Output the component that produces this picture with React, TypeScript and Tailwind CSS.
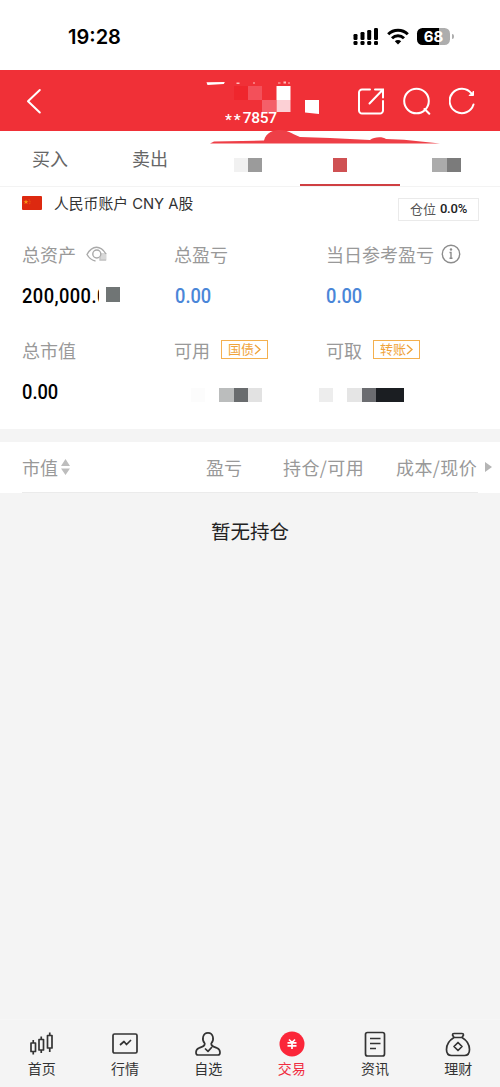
import clsx from "clsx";
import { ReactNode } from "react";

export default function App() {
  return (
    <div className="flex h-[1087px] w-[500px] flex-col overflow-hidden bg-[#f4f4f4] font-['Noto_Sans_CJK_SC','Noto_Sans',sans-serif]">
      <StatusBar />
      <Header />
      <Tabs />
      <Account />
      <Holdings />
      <BottomNav />
    </div>
  );
}

function StatusBar() {
  return (
    <div className="flex h-[70px] shrink-0 items-start justify-between bg-white pr-[46px] pl-[68px]">
      <span className="mt-[23px] font-['Inter',sans-serif] text-[20px] leading-7 font-semibold text-black">
        19:28
      </span>
      <div className="mt-[27px] flex items-center">
        <svg width="26" height="19" viewBox="0 0 26 19">
          <rect x="0.5" y="7" width="4" height="6" rx="1.2" />
          <rect x="7.5" y="5" width="4" height="8" rx="1.2" />
          <rect x="14.2" y="3" width="4" height="10" rx="1.2" />
          <rect x="21" y="1" width="4" height="12" rx="1.2" />
          <rect x="0.5" y="14" width="4" height="4" rx="1.3" />
          <rect x="7.5" y="14" width="4" height="4" rx="1.3" />
          <rect x="14.2" y="14" width="4" height="4" rx="1.3" />
          <rect x="21" y="14" width="4" height="4" rx="1.3" />
        </svg>
        <svg
          className="ml-2"
          width="22"
          height="17"
          viewBox="0 0 22 17"
          fill="none"
          stroke="#000"
          strokeWidth="3"
        >
          <path d="M1.2 6.3a14 14 0 0 1 19.6 0" />
          <path d="M5 10.3a8.6 8.6 0 0 1 12 0" />
          <path d="M7.8 13.2a4.6 4.6 0 0 1 6.4 0L11 16.4z" fill="#000" stroke="none" />
        </svg>
        <div className="ml-2 flex h-[17px] w-[33px] items-center justify-center rounded-[5.5px] bg-linear-to-r from-black from-68% to-[#adadad] to-68%">
          <span className="font-['Inter',sans-serif] text-[15px] leading-none font-bold text-white">
            68
          </span>
        </div>
        <span className="ml-0.5 h-[5px] w-[2px] rounded-r bg-[#adadad]" />
      </div>
    </div>
  );
}

function Header() {
  return (
    <header className="relative flex h-[61px] shrink-0 items-center justify-between bg-[#f03037] pr-[25px] pl-[26px]">
      <svg
        width="17"
        height="26"
        viewBox="0 0 17 26"
        fill="none"
        stroke="#fff"
        strokeWidth="2"
        strokeLinecap="round"
        strokeLinejoin="round"
      >
        <path d="M13.8 2 2 13.2 13.8 24.5" />
      </svg>
      <div className="absolute top-[42px] left-[225px] flex h-[13px] w-[54px] items-end overflow-hidden font-['Roboto',sans-serif] text-[15.5px] leading-[15px] font-medium whitespace-nowrap text-white">
        <span className="translate-y-[3px] tracking-[2px]">**</span>
        <span className="translate-y-px tracking-[-0.3px]">7857</span>
      </div>
      <svg
        className="pointer-events-none absolute top-0 left-[200px] z-10"
        width="250"
        height="76"
        viewBox="0 0 250 76"
      >
        <path d="M6.5 12.2 24.8 12l-1 2.1L7.5 15z" fill="#fff" />
        <path
          d="M36.5 12.5h3v1.5h-3zM53 12.5h2v1h-2zM78 12.5h2.5v1H78zM83.5 11.5H86v2h-2.5zM88 12.5h2v1h-2z"
          fill="#fbb"
        />
        <path d="M34 16h14v14H34z" fill="#ef262d" />
        <path d="M48 16h14v14H48z" fill="#f3505a" />
        <path d="M62 30h14v12H62z" fill="#f45f69" />
        <path d="M76.5 16h14v14h-14z" fill="#fff" />
        <path d="M76.5 30h14v12h-14z" fill="#fcd0d5" />
        <path d="M105 30h14v14l-14-1.5z" fill="#fff" />
        <path
          d="M10 73.5 14 71.5 64 70.500C66 62 74 60 80 60c8 0 10 3 20 7l30 1 40 2c4-3.500 13-3.500 16-1l18 .8 36 3.700z"
          fill="#ee3f47"
        />
      </svg>
      <div className="flex items-center gap-[18px]">
        <svg
          width="27"
          height="28"
          viewBox="0 0 27 28"
          fill="none"
          stroke="#fff"
          strokeWidth="2"
          strokeLinecap="round"
        >
          <path d="M12 2.500H4a3 3 0 0 0-3 3v18a3 3 0 0 0 3 3h18a3 3 0 0 0 3-3V14M11.500 16.500 24.500 3M17 2.500h8v8" />
        </svg>
        <svg
          width="28"
          height="28"
          viewBox="0 0 28 28"
          fill="none"
          stroke="#fff"
          strokeWidth="2"
          strokeLinecap="round"
        >
          <circle cx="13.500" cy="14" r="12.300" />
          <path d="m21.500 22 4.800 4.800" />
        </svg>
        <svg
          width="26"
          height="28"
          viewBox="0 0 26 28"
          fill="none"
          stroke="#fff"
          strokeWidth="2"
          strokeLinecap="round"
        >
          <path d="M24.500 17.500A12.200 12.200 0 1 1 22.500 6.500" />
          <path d="M24.500 4.500v4h-4z" fill="#fff" strokeWidth="1" />
        </svg>
      </div>
    </header>
  );
}

function Tabs() {
  return (
    <div className="grid h-[56px] shrink-0 grid-cols-5 border-b border-[#f3f3f3] bg-white text-[18px] text-[#666]">
      <div className="flex items-center justify-center">买入</div>
      <div className="flex items-center justify-center">卖出</div>
      <div className="flex justify-center pt-[27px] pr-1">
        <Mosaic colors={["bg-[#f1f1f1]", "bg-[#9b9b9b]"]} />
      </div>
      <div className="flex flex-col items-center justify-between border-b-2 border-[#cf3f42] pt-[27px] pr-5">
        <Mosaic colors={["bg-[#cf5153]"]} />
      </div>
      <div className="flex justify-center pt-[27px] pr-[7px]">
        <Mosaic colors={["bg-[#ababab]", "bg-[#7b7b7b]"]} />
      </div>
    </div>
  );
}

function Account() {
  return (
    <section className="flex h-[242px] shrink-0 flex-col bg-white">
      <div className="flex h-9 items-center pr-[21px] pl-[22px]">
        <svg className="-mt-1" width="20" height="14" viewBox="0 0 20 14">
          <rect width="20" height="14" rx="1" fill="#dd2910" />
          <path
            d="m4 3.500.7 1.700h1.800L5 6.300l.6 1.800L4 7 2.400 8.100 3 6.300 1.500 5.200h1.800z"
            fill="#fb9a16"
          />
          <path d="M7 3.500q2 2.500 0 5.500" stroke="#ec6d16" fill="none" strokeDasharray="1 1" />
        </svg>
        <span className="-mt-0.5 ml-[12px] font-['Inter','Noto_Sans_CJK_SC',sans-serif] text-[14.8px] whitespace-nowrap text-[#333]">
          人民币账户 CNY A股
        </span>
        <div className="mt-2 ml-auto flex h-[23px] w-[81px] items-center justify-center gap-[4px] border border-[#eaeaea] text-[13px] text-[#555]">
          仓位
          <span className="font-['Roboto',sans-serif] text-[13px] font-medium tracking-[-0.2px] text-[#222]">
            0.0%
          </span>
        </div>
      </div>

      <div className="grid grid-cols-[152px_152px_1fr] pt-[16px] pl-[22px]">
        <Stat label="总资产" extra={<EyeIcon />}>
          <div className="flex items-center">
            <div className="w-[77px] overflow-hidden">
              <Amount value="200,000.0" className="tracking-[0.5px]" />
            </div>
            <div className="-mt-[3px] ml-[7px]">
              <Mosaic colors={["bg-[#707575]"]} />
            </div>
          </div>
        </Stat>
        <Stat label="总盈亏">
          <Amount value="0.00" className="ml-px text-[#4a86d8]" />
        </Stat>
        <Stat label="当日参考盈亏" extra={<InfoIcon />}>
          <Amount value="0.00" className="text-[#4a86d8]" />
        </Stat>
      </div>

      <div className="grid grid-cols-[152px_152px_1fr] pt-[25px] pl-[22px]">
        <Stat label="总市值">
          <Amount value="0.00" />
        </Stat>
        <Stat label="可用" extra={<Tag>国债</Tag>}>
          <div className="flex pt-[10px] pl-[17px]">
            <Mosaic
              colors={[
                "bg-[#fcfcfc]",
                "bg-white",
                "bg-[#bbbdbd]",
                "bg-[#696c6e]",
                "bg-[#e2e2e2]",
              ]}
            />
          </div>
        </Stat>
        <Stat label="可取" extra={<Tag>转账</Tag>}>
          <div className="-ml-[7px] flex pt-[10px]">
            <Mosaic
              colors={[
                "bg-[#ededed]",
                "bg-white",
                "bg-[#e5e5e5]",
                "bg-[#6b6c70]",
                "bg-[#1b1e22]",
                "bg-[#1b1e22]",
              ]}
            />
          </div>
        </Stat>
      </div>
    </section>
  );
}

interface StatProps {
  label: string;
  extra?: ReactNode;
  children: ReactNode;
}
function Stat({ label, extra, children }: StatProps) {
  return (
    <div>
      <div className="flex h-[30px] items-center text-[18px] whitespace-nowrap text-[#999]">
        {label}
        {extra}
      </div>
      <div className="mt-[13px] h-7">{children}</div>
    </div>
  );
}

function Amount({ value, className }: { value: string; className?: string }) {
  return (
    <div
      className={clsx(
        "origin-left scale-x-[0.87] font-['Roboto',sans-serif] text-[21px] leading-7 font-medium",
        className,
      )}
    >
      {value}
    </div>
  );
}

function Tag({ children }: { children: ReactNode }) {
  return (
    <span className="-mt-0.5 ml-[11px] flex h-[19px] w-[47px] items-center justify-center border-[1.5px] border-[#f4b04e] text-[13px] text-[#f0a43c]">
      {children}
      <svg
        width="7"
        height="11"
        viewBox="0 0 7 11"
        fill="none"
        stroke="#f0a43c"
        strokeWidth="1.4"
      >
        <path d="m1 1 5 4.500L1 10" />
      </svg>
    </span>
  );
}

function Mosaic({ colors }: { colors: string[] }) {
  return (
    <div className="flex">
      {colors.map((color, index) => (
        <span key={index} className={clsx("size-[14.2px]", color)} />
      ))}
    </div>
  );
}

function EyeIcon() {
  return (
    <svg
      className="ml-[10px]"
      width="21"
      height="16"
      viewBox="0 0 21 16"
      fill="none"
      stroke="#aaa"
      strokeWidth="1.4"
    >
      <path d="M14 7h6.500v7.500H14z" fill="#d8d8d8" stroke="none" />
      <path d="M9.500 15C6 14.500 3 12 1 8.500 3.500 4 6.500 1.300 10.500 1.300S17.500 4 20 8" />
      <circle cx="10.800" cy="8" r="4" />
      <path d="M14 10.500v3.500h6" stroke="#c4c4c4" />
    </svg>
  );
}

function InfoIcon() {
  return (
    <svg
      className="ml-[7px]"
      width="20"
      height="20"
      viewBox="0 0 20 20"
      fill="none"
      stroke="#8c8c8c"
      strokeWidth="1.4"
    >
      <circle cx="10" cy="10" r="8.700" />
      <path d="M8.500 8.500H10v5.500M8.500 14.300h3" />
      <circle cx="10" cy="5.500" r="1.200" fill="#8c8c8c" stroke="none" />
    </svg>
  );
}

function Holdings() {
  return (
    <section className="flex grow flex-col pt-[13px]">
      <div className="flex h-[50px] items-center bg-white pl-[22px] text-[18px] whitespace-nowrap text-[#999]">
        <span>市值</span>
        <svg className="ml-[3px]" width="9" height="16" viewBox="0 0 9 16" fill="#bdbdbd">
          <path d="m4.500 0 4.500 7H0zM4.500 16 9 9.500H0z" />
        </svg>
        <span className="ml-[136px]">盈亏</span>
        <span className="ml-[41px] tracking-[0.4px]">持仓/可用</span>
        <span className="ml-[32px] tracking-[0.4px]">成本/现价</span>
        <svg className="ml-2" width="7" height="10" viewBox="0 0 7 10" fill="#b5b5b5">
          <path d="m0 0 7 5-7 5z" />
        </svg>
      </div>
      <div className="bg-white px-[22px]">
        <div className="h-px bg-[#ebebeb]" />
      </div>
      <p className="mt-[23px] text-center text-[19.5px] leading-[30px] text-[#222]">暂无持仓</p>
    </section>
  );
}

const NAV_ITEMS: { title: string; icon: ReactNode; active?: boolean }[] = [
  {
    title: "首页",
    icon: (
      <path d="M3 12h4.500v8.500H3zM5.250 9V12M5.250 20.500v3M11 8.500h4.500v10.500H11zM13.250 5.500v3M13.250 19v3M19.500 4.500H24V17h-4.500zM21.750 1.500v3M21.750 17v4" />
    ),
  },
  {
    title: "行情",
    icon: (
      <>
        <rect x="2" y="3" width="24" height="19" rx="1.500" />
        <path d="m9 14 4-3.500 2.500 3 4.500-4.500" />
      </>
    ),
  },
  {
    title: "自选",
    icon: (
      <>
        <path d="M10.800 12.500C7.500 9 8.500 1.800 14 1.800S20.500 9 17.200 12.500C17 15 19 15.500 23 17c2.500 1 3 2.500 3 4.500 0 1.800-.5 2.500-2 2.500H4c-1.500 0-2-.7-2-2.500C2 19.500 2.500 18 5 17c4-1.500 6-2 5.800-4.500z" />
        <path d="m11 17.500 3 2.800 4-4.300" />
      </>
    ),
  },
  {
    title: "交易",
    active: true,
    icon: (
      <>
        <circle cx="14" cy="13" r="12.500" fill="#fb2639" stroke="none" />
        <path d="m11 8.500 3 3 3-3M9.500 11.800h9M9.500 14.800h9M14 11.500v6.500" stroke="#fff" />
      </>
    ),
  },
  {
    title: "资讯",
    icon: (
      <>
        <rect x="4.500" y="1.500" width="19" height="23.500" rx="2" />
        <path d="M9 7.500h10.500M9 12.500h10.500M9 17.500h6" />
      </>
    ),
  },
  {
    title: "理财",
    icon: (
      <>
        <path d="M10 6.500 8.500 4Q8.500 2.500 10 2.500h8q1.500 0 1.500 1.500L18 6.500zM10 6.500C5 9.500 2.500 14 2.500 18.500c0 4.500 2 6 5 6h13c3 0 5-1.500 5-6C25.500 14 23 9.500 18 6.500" />
        <path d="m14 11.500 4 4-4 4-4-4z" />
      </>
    ),
  },
];

function BottomNav() {
  return (
    <nav className="grid h-[68px] shrink-0 grid-cols-6 border-t border-[#f6f6f6] bg-[#f4f4f4]">
      {NAV_ITEMS.map((item) => (
        <div
          key={item.title}
          className={clsx(
            "flex flex-col items-center pt-[11px] text-[14px] leading-5",
            item.active ? "text-[#f02c40]" : "text-[#333]",
          )}
        >
          <svg
            width="28"
            height="27"
            viewBox="0 0 28 27"
            fill="none"
            stroke="#333"
            strokeWidth="1.7"
            strokeLinejoin="round"
          >
            {item.icon}
          </svg>
          {item.title}
        </div>
      ))}
    </nav>
  );
}
